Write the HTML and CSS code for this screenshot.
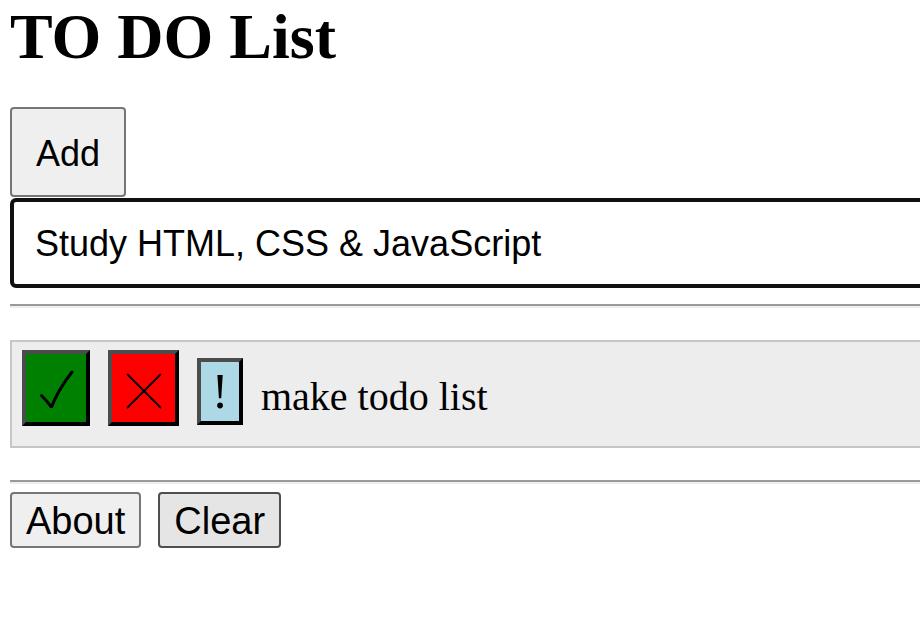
FILE: index.html
```html
<!DOCTYPE html>
<html>
<head>
<meta charset="utf-8">
<title>TO DO List</title>
<link rel="stylesheet" href="styles.css">
</head>
<body>
<h1 class="title">TO DO List</h1>
<button class="add-btn">Add</button>
<input class="task-input" type="text" value="Study HTML, CSS &amp; JavaScript">
<hr class="rule rule-top">
<div class="todo-item">
  <button class="act act-done" aria-label="done">
    <svg width="36" height="40" viewBox="0 0 36 40"><path d="M3.5 27.5 Q8 32 13.5 39 Q20 22 34 4" fill="none" stroke="#000" stroke-width="3" stroke-linecap="round" stroke-linejoin="round"/></svg>
  </button>
  <button class="act act-del" aria-label="delete">
    <svg width="36" height="36" viewBox="0 0 36 36"><path d="M1 1 L35 35 M35 1 L1 35" fill="none" stroke="#000" stroke-width="2"/></svg>
  </button>
  <button class="act act-imp">!</button>
  <span class="todo-text">make todo list</span>
</div>
<hr class="rule rule-bottom">
<div class="footer">
  <button class="foot-btn">About</button>
  <button class="foot-btn foot-btn-hover">Clear</button>
</div>
</body>
</html>
```

FILE: styles.css
```css
html, body {
  margin: 0;
  padding: 0;
  overflow: hidden;
  background: #fff;
}
body {
  padding: 0 0 0 10px;
  font-family: "Liberation Serif", "Times New Roman", serif;
  color: #000;
}
.title {
  font-family: "Liberation Serif", "Times New Roman", serif;
  font-size: 64px;
  font-weight: bold;
  line-height: 74px;
  margin: 0 0 33px 0;
}
.add-btn {
  display: block;
  box-sizing: border-box;
  width: 116px;
  height: 90px;
  margin: 0;
  padding: 4px 0 0 0;
  border: 2px solid #767676;
  border-radius: 4px;
  background: #efefef;
  font-family: "Liberation Sans", Arial, sans-serif;
  font-size: 36px;
  color: #000;
}
.task-input {
  display: block;
  box-sizing: border-box;
  width: 960px;
  height: 90px;
  margin: 1px 0 0 0;
  padding: 2px 0 0 21px;
  border: 4px solid #101010;
  border-radius: 6px;
  font-family: "Liberation Sans", Arial, sans-serif;
  font-size: 36px;
  color: #000;
  background: #fff;
  outline: none;
}
.rule {
  height: 0;
  margin: 0;
  width: 960px;
  border: none;
  border-top: 2px solid #9a9a9a;
  border-bottom: 2px solid #eeeeee;
}
.rule-top {
  margin-top: 16px;
}
.todo-item {
  box-sizing: border-box;
  width: 960px;
  height: 108px;
  margin-top: 32px;
  padding: 8px 0 0 10px;
  display: flex;
  align-items: flex-start;
  gap: 18px;
  background: #ededed;
  border: 2px solid #c6c6c6;
}
.act {
  box-sizing: border-box;
  margin: 0;
  padding: 0;
  display: flex;
  align-items: center;
  justify-content: center;
  border-width: 4px;
  border-style: solid;
  border-top-color: #4c4c4c;
  border-left-color: #4c4c4c;
  border-bottom-color: #000;
  border-right-color: #000;
  border-radius: 0;
  color: #000;
}
.act-done {
  width: 68px;
  height: 76px;
  background: #008000;
}
.act-del {
  width: 71px;
  height: 76px;
  background: #ff0000;
  padding-top: 6px;
}
.act-imp {
  width: 46px;
  height: 67px;
  margin-top: 8px;
  background: #add8e6;
  font-family: "Liberation Serif", "Times New Roman", serif;
  font-size: 50px;
  line-height: 1;
  padding-bottom: 2px;
}
.todo-text {
  font-family: "Liberation Serif", "Times New Roman", serif;
  font-size: 40px;
  line-height: 1;
  margin-top: 27px;
}
.rule-bottom {
  margin-top: 32px;
}
.footer {
  display: flex;
  gap: 17px;
  margin-top: 8px;
}
.foot-btn {
  box-sizing: border-box;
  height: 56px;
  margin: 0;
  padding: 2px 14px 0 14px;
  border: 2px solid #767676;
  border-radius: 4px;
  background: #efefef;
  font-family: "Liberation Sans", Arial, sans-serif;
  font-size: 38px;
  color: #000;
}
.foot-btn-hover {
  background: #e5e5e5;
  border-color: #4f4f4f;
}
```
